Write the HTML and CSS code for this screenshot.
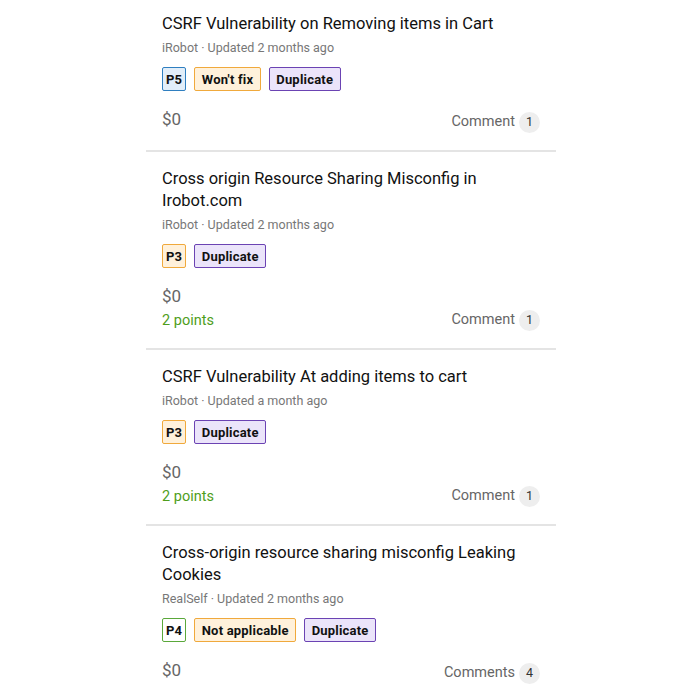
FILE: index.html
```html
<!DOCTYPE html>
<html>
<head>
<meta charset="utf-8">
<link rel="stylesheet" href="styles.css">
</head>
<body>
<div class="list">
  <div class="card">
    <div class="title">CSRF Vulnerability on Removing items in Cart</div>
    <div class="meta">iRobot · Updated 2 months ago</div>
    <div class="tags">
      <span class="tag p blue">P5</span>
      <span class="tag orange">Won't fix</span>
      <span class="tag purple">Duplicate</span>
    </div>
    <div class="foot">
      <div class="left"><div class="amount">$0</div></div>
      <div class="comment">Comment <span class="count">1</span></div>
    </div>
  </div>
  <div class="card">
    <div class="title">Cross origin Resource Sharing Misconfig in Irobot.com</div>
    <div class="meta">iRobot · Updated 2 months ago</div>
    <div class="tags">
      <span class="tag p orange">P3</span>
      <span class="tag purple">Duplicate</span>
    </div>
    <div class="foot">
      <div class="left"><div class="amount">$0</div><div class="points">2 points</div></div>
      <div class="comment">Comment <span class="count">1</span></div>
    </div>
  </div>
  <div class="card">
    <div class="title">CSRF Vulnerability At adding items to cart</div>
    <div class="meta">iRobot · Updated a month ago</div>
    <div class="tags">
      <span class="tag p orange">P3</span>
      <span class="tag purple">Duplicate</span>
    </div>
    <div class="foot">
      <div class="left"><div class="amount">$0</div><div class="points">2 points</div></div>
      <div class="comment">Comment <span class="count">1</span></div>
    </div>
  </div>
  <div class="card">
    <div class="title">Cross-origin resource sharing misconfig Leaking Cookies</div>
    <div class="meta">RealSelf · Updated 2 months ago</div>
    <div class="tags">
      <span class="tag p green">P4</span>
      <span class="tag orange">Not applicable</span>
      <span class="tag purple">Duplicate</span>
    </div>
    <div class="foot">
      <div class="left"><div class="amount">$0</div></div>
      <div class="comment">Comments <span class="count">4</span></div>
    </div>
  </div>
</div>
</body>
</html>
```
FILE: styles.css
```css
html, body {
  margin: 0;
  padding: 0;
  background: #fff;
}
body {
  font-family: Roboto, "Liberation Sans", sans-serif;
  color: #111;
  overflow: hidden;
}
.list {
  width: 410px;
  margin: -3px 0 0 146px;
}
.card {
  padding: 16px 16px 15px 16px;
  border-bottom: 2px solid #e4e4e4;
}
.title {
  font-size: 16.5px;
  line-height: 22px;
  color: #111;
}
.meta {
  margin-top: 4px;
  font-size: 12.5px;
  line-height: 18px;
  color: #777;
}
.tags {
  display: flex;
  gap: 8px;
  margin-top: 10px;
}
.tag {
  display: inline-flex;
  align-items: center;
  height: 24px;
  box-sizing: border-box;
  padding: 0 6.5px;
  border: 1.5px solid;
  border-radius: 2px;
  font-size: 13px;
  font-weight: 700;
  letter-spacing: 0.2px;
  color: #111;
}
.tag.p {
  padding: 0 3px;
}
.blue { border-color: #2f7fc0; background: #e2eef9; }
.orange { border-color: #f0a93c; background: #fff1db; }
.purple { border-color: #6b43b3; background: #ebe4fa; }
.green { border-color: #5aa83a; background: #fff; }
.foot {
  display: flex;
  justify-content: space-between;
  min-height: 28px;
  margin-top: 16px;
}
.left {
  align-self: flex-start;
}
.amount {
  font-size: 17px;
  line-height: 24px;
  color: #666;
}
.points {
  margin-top: 1px;
  font-size: 14.5px;
  line-height: 24px;
  color: #4e9e1c;
}
.comment {
  align-self: flex-end;
  margin-bottom: 1px;
  display: flex;
  align-items: center;
  gap: 4px;
  font-size: 14.5px;
  line-height: 24px;
  color: #666;
}
.count {
  display: inline-flex;
  align-items: center;
  justify-content: center;
  width: 21px;
  height: 21px;
  border-radius: 50%;
  background: #eeeeee;
  font-size: 12.5px;
  color: #333;
}
```
